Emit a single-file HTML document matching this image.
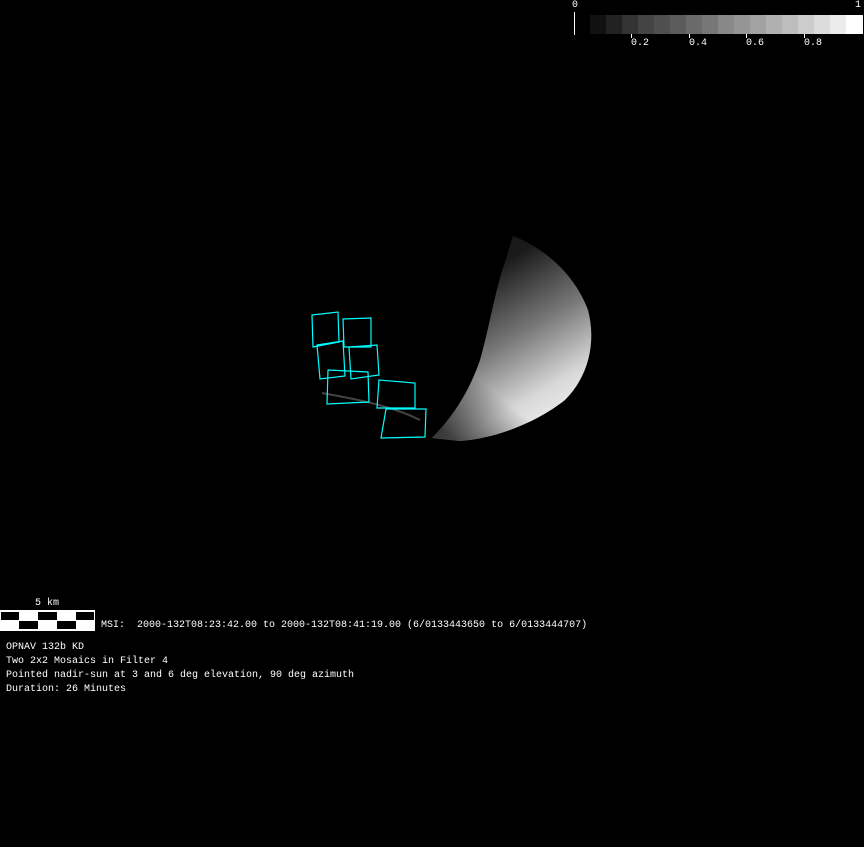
<!DOCTYPE html>
<html><head><style>
html,body{margin:0;padding:0;background:#000;width:864px;height:847px;overflow:hidden}
.t{position:absolute;color:#fff;font-family:"Liberation Mono",monospace;font-size:10px;line-height:12px;white-space:pre}
.m{line-height:14px}
</style></head><body>
<svg width="864" height="847" style="position:absolute;left:0;top:0">
<defs>
<linearGradient id="ag" x1="490" y1="270" x2="580" y2="420" gradientUnits="userSpaceOnUse">
<stop offset="0" stop-color="#1a1a1a"/><stop offset="0.4" stop-color="#777"/><stop offset="0.75" stop-color="#d8d8d8"/><stop offset="1" stop-color="#f4f4f4"/></linearGradient>
<linearGradient id="ag2" x1="440" y1="430" x2="520" y2="330" gradientUnits="userSpaceOnUse">
<stop offset="0" stop-color="#000" stop-opacity="0.7"/><stop offset="0.5" stop-color="#000" stop-opacity="0"/></linearGradient>
</defs>
<line x1="574.5" y1="12" x2="574.5" y2="35" stroke="#fff"/>
<g>
<rect x="590" y="15" width="16" height="19" fill="#111"/><rect x="606" y="15" width="16" height="19" fill="#222"/><rect x="622" y="15" width="16" height="19" fill="#333"/><rect x="638" y="15" width="16" height="19" fill="#444"/><rect x="654" y="15" width="16" height="19" fill="#4f4f4f"/><rect x="670" y="15" width="16" height="19" fill="#5c5c5c"/><rect x="686" y="15" width="16" height="19" fill="#6a6a6a"/><rect x="702" y="15" width="16" height="19" fill="#777"/><rect x="718" y="15" width="16" height="19" fill="#888"/><rect x="734" y="15" width="16" height="19" fill="#959595"/><rect x="750" y="15" width="16" height="19" fill="#a2a2a2"/><rect x="766" y="15" width="16" height="19" fill="#b0b0b0"/><rect x="782" y="15" width="16" height="19" fill="#bdbdbd"/><rect x="798" y="15" width="16" height="19" fill="#cccccc"/><rect x="814" y="15" width="16" height="19" fill="#dcdcdc"/><rect x="830" y="15" width="16" height="19" fill="#ececec"/><rect x="846" y="15" width="17" height="19" fill="#fff"/>
</g>
<g stroke="#fff"><line x1="631.5" y1="34" x2="631.5" y2="38"/><line x1="689.5" y1="34" x2="689.5" y2="38"/><line x1="746.5" y1="34" x2="746.5" y2="38"/><line x1="804.5" y1="34" x2="804.5" y2="38"/></g>
<path d="M513,236 C545,248 575,275 588,310 C596,340 590,375 565,400 C540,420 500,438 460,441 L432,438 C450,420 468,395 480,360 C490,325 495,290 505,262 Z" fill="url(#ag)"/>
<path d="M513,236 C545,248 575,275 588,310 C596,340 590,375 565,400 C540,420 500,438 460,441 L432,438 C450,420 468,395 480,360 C490,325 495,290 505,262 Z" fill="url(#ag2)"/>
<path d="M322,393 C350,398 390,405 420,420" stroke="#444" stroke-width="2" fill="none"/>
<g fill="none" stroke="#0ff" stroke-width="1.2">
<polygon points="312,315 338,312 339,342 313,347"/>
<polygon points="343,319 371,318 371,347 344,347"/>
<polygon points="317,345 343,341 345,376 320,379"/>
<polygon points="349,347 377,345 379,375 351,379"/>
<polygon points="328,370 368,372 369,402 327,404"/>
<polygon points="379,380 415,383 415,408 377,408"/>
<polygon points="386,409 426,409 425,437 381,438"/>
</g>
<rect x="0" y="610" width="95" height="21" fill="#fff"/>
<g fill="#000">
<rect x="1" y="612" width="18" height="8"/><rect x="38" y="612" width="19" height="8"/><rect x="76" y="612" width="18" height="8"/>
<rect x="19" y="621" width="19" height="8"/><rect x="57" y="621" width="19" height="8"/>
</g>
</svg>
<div class="t" style="left:572px;top:0px">0</div>
<div class="t" style="left:855px;top:0px">1</div>
<div class="t" style="left:631px;top:38px">0.2</div>
<div class="t" style="left:689px;top:38px">0.4</div>
<div class="t" style="left:746px;top:38px">0.6</div>
<div class="t" style="left:804px;top:38px">0.8</div>
<div class="t" style="left:35px;top:598px">5 km</div>
<div class="t" style="left:101px;top:620px">MSI:  2000-132T08:23:42.00 to 2000-132T08:41:19.00 (6/0133443650 to 6/0133444707)</div>
<div class="t m" style="left:6px;top:641px">OPNAV 132b KD
Two 2x2 Mosaics in Filter 4
Pointed nadir-sun at 3 and 6 deg elevation, 90 deg azimuth
Duration: 26 Minutes</div>
</body></html>
